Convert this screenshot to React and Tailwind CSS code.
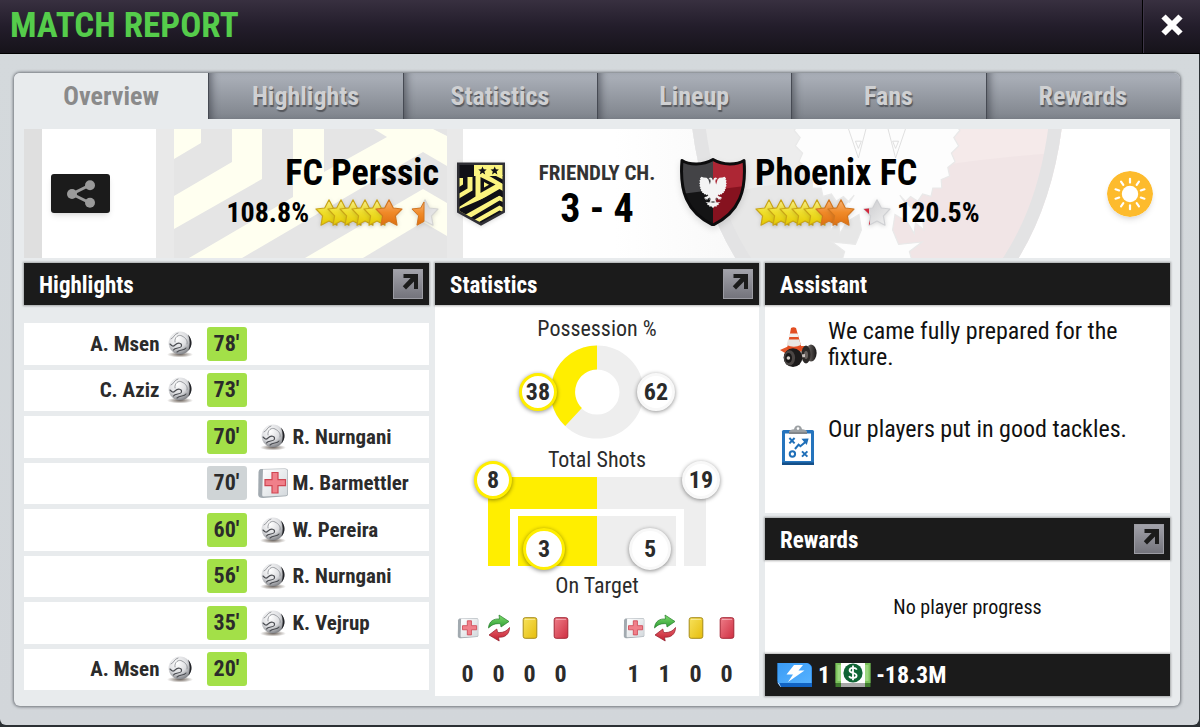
import React from "react";

const TABS = ["Overview", "Highlights", "Statistics", "Lineup", "Fans", "Rewards"];

const EVENTS = [
  { minute: 78, side: "home", name: "A. Msen", kind: "goal" },
  { minute: 73, side: "home", name: "C. Aziz", kind: "goal" },
  { minute: 70, side: "away", name: "R. Nurngani", kind: "goal" },
  { minute: 70, side: "away", name: "M. Barmettler", kind: "injury" },
  { minute: 60, side: "away", name: "W. Pereira", kind: "goal" },
  { minute: 56, side: "away", name: "R. Nurngani", kind: "goal" },
  { minute: 35, side: "away", name: "K. Vejrup", kind: "goal" },
  { minute: 20, side: "home", name: "A. Msen", kind: "goal" },
];

const STAR = "M14 .8 L18.3 9 L27 10 L20.4 16.8 L22 26.2 L14 22 L6 26.2 L7.6 16.8 L1 10 L9.7 9 Z";

const SHIELD = "M1 1.5 C8 6 22 6.5 32 .5 C42 6.5 56 6 63 1.5 C65.5 31 59 53 32 66 C5 53 -1.5 31 1 1.5 Z";

const HALF_EAGLE =
  "M32 21.5 L30.8 19 L29 18.6 L27.6 20 L29.4 20.6 L29.6 22.6 L28.9 25.4 L27.4 20.4 L25.6 18.8 L22.5 18.6 L20.4 17.8 L18.9 19.4 L19.6 20.6 L18.3 21.8 L19.2 23 L18.2 24.4 L19.2 25.6 L18.4 27 L19.6 28.2 L19 29.6 L20.2 30.6 L19.9 32 L21.3 32.6 L21.2 34 L22.7 34 L23 35.4 L24.4 35 L25.2 36.2 L26.4 35.4 L27.4 36.4 L28.2 35.2 L26 37.6 L23.8 38 L23 39.6 L24.4 39.2 L24.2 41 L25.6 39.8 L25.8 41.6 L27 39.6 L29 38.4 L29.4 41 L28.4 43.4 L24.5 43 L26.6 44.6 L26.2 46 L28.2 46.2 L28.4 47.8 L30.2 47.2 L32 49 Z";

function Defs() {
  return (
    <svg className="absolute h-0 w-0" aria-hidden="true">
      <defs>
        <linearGradient id="yellow" x1="0" y1="0" x2="0" y2="1">
          <stop offset="0" stopColor="#f7ec8c" />
          <stop offset=".45" stopColor="#f0e030" />
          <stop offset="1" stopColor="#e3c800" />
        </linearGradient>
        <linearGradient id="orange" x1="0" y1="0" x2="0" y2="1">
          <stop offset="0" stopColor="#f7b173" />
          <stop offset=".5" stopColor="#f08a28" />
          <stop offset="1" stopColor="#de6f10" />
        </linearGradient>
        <linearGradient id="silver" x1="0" y1="0" x2="1" y2="1">
          <stop offset="0" stopColor="#c9c9cc" />
          <stop offset="1" stopColor="#f2f2f2" />
        </linearGradient>
        <radialGradient id="ball" cx=".38" cy=".3" r=".75">
          <stop offset="0" stopColor="#ffffff" />
          <stop offset=".55" stopColor="#dcdde0" />
          <stop offset="1" stopColor="#77797e" />
        </radialGradient>
        <radialGradient id="shade">
          <stop offset="0" stopColor="#3a2c20" stopOpacity=".75" />
          <stop offset="1" stopColor="#3a2c20" stopOpacity="0" />
        </radialGradient>
        <linearGradient id="box" x1="0" y1="0" x2="1" y2="1">
          <stop offset="0" stopColor="#ffffff" />
          <stop offset="1" stopColor="#d3d8dc" />
        </linearGradient>
        <linearGradient id="redcard" x1="0" y1="0" x2="1" y2="1">
          <stop offset="0" stopColor="#ee7d88" />
          <stop offset="1" stopColor="#cf2f42" />
        </linearGradient>
        <linearGradient id="yellowcard" x1="0" y1="0" x2="1" y2="1">
          <stop offset="0" stopColor="#f7e25c" />
          <stop offset="1" stopColor="#e6bd0c" />
        </linearGradient>
        <linearGradient id="green" x1="0" y1="0" x2="0" y2="1">
          <stop offset="0" stopColor="#7fdc6c" />
          <stop offset="1" stopColor="#2c9c33" />
        </linearGradient>
        <linearGradient id="red" x1="0" y1="0" x2="0" y2="1">
          <stop offset="0" stopColor="#e8606a" />
          <stop offset="1" stopColor="#c01f30" />
        </linearGradient>
        <linearGradient id="energy" x1="0" y1="0" x2="1" y2="1">
          <stop offset="0" stopColor="#3a9bf5" />
          <stop offset="1" stopColor="#56b2ff" />
        </linearGradient>
        <linearGradient id="fadeLeft" x1="0" y1="0" x2="1" y2="0">
          <stop offset="0" stopColor="#ffffff" />
          <stop offset="1" stopColor="#f3f3f3" />
        </linearGradient>
        <linearGradient id="steel" x1="0" y1="0" x2="1" y2="0">
          <stop offset="0" stopColor="#c9c5c2" />
          <stop offset=".4" stopColor="#5a5552" />
          <stop offset="1" stopColor="#171515" />
        </linearGradient>
        <clipPath id="shieldClip">
          <path d={SHIELD} />
        </clipPath>
        <clipPath id="crestClip">
          <path d="M2.5 3 H45.5 V49 L24 60.8 L2.5 49 Z" />
        </clipPath>
      </defs>
    </svg>
  );
}

function Star({ fill, stroke, half, className = "" }) {
  return (
    <svg viewBox="0 0 28 28" className={`h-[30px] w-7 shrink-0 drop-shadow-sm ${className}`} aria-hidden="true">
      <path d={STAR} fill={fill} stroke={stroke} strokeWidth="1.2" strokeLinejoin="round" />
      {half}
    </svg>
  );
}

function Stars({ oranges, partial }) {
  const list = [...Array(5).fill("yellow"), ...Array(oranges).fill("orange")];
  return (
    <span className="flex items-center" role="img" aria-label="Team rating">
      {list.map((c, i) => (
        <Star
          key={i}
          fill={c === "yellow" ? "url(#yellow)" : "url(#orange)"}
          stroke={c === "yellow" ? "#c9a516" : "#d27620"}
          className={i ? "-ml-4" : ""}
        />
      ))}
      <Star
        fill="url(#silver)"
        stroke={partial === "half" ? "#d4d4d2" : "#cfd0d3"}
        className="ml-2"
        half={
          partial === "half" ? (
            <path
              d="M13 3 L13 22.4 L6 26.2 L7.6 16.8 L1 10 L9.7 9 Z"
              fill="url(#orange)"
              stroke="#d27620"
              strokeLinejoin="round"
            />
          ) : (
            <path d="M.8 10 L6 9.6 L6 15 Z M6 21 L6 26 L7 25 Z" fill="#d2283c" />
          )
        }
      />
    </span>
  );
}

function HomeCrest() {
  return (
    <svg viewBox="0 0 48 64" className="h-16 w-12 shrink-0 drop-shadow-sm" role="img" aria-label="FC Perssic crest">
      <path d="M0 .5 H48 V50.5 L24 63.8 L0 50.5 Z" fill="#303036" />
      <g clipPath="url(#crestClip)">
        <rect width="48" height="64" fill="#101016" />
        <path d="M17 3 H46 V14 H17 Z" fill="#fbf480" />
        <g fill="#fbf480">
          <path d="M2 16 H6 V22.5 L2 25 Z" />
          <path d="M10.5 15 H15.5 V28.5 L2 36.5 V31.5 L10.5 26.5 Z" />
          <path d="M18.5 12 H29 L46 22 V29 L42.5 27 L2 50.5 V45 L18.5 34.5 Z" />
          <path d="M8 53.5 L2 50 L42.5 33.5 L46 35.5 V40 L42.5 38.5 L13 56 Z" />
          <path d="M17 58 L42.5 43.5 L46 45.5 V50 L42.5 48.5 L22 60 Z" />
          <path d="M37 13 H46 V17.5 Z" />
        </g>
        <path d="M2 47 L42.5 29.5 L46 31 V35.5 L42.5 33.5 L7 53.5 L2 51 Z" fill="#101016" />
        <path d="M23.5 15 L38.5 22.5 L23.5 31 Z" fill="#101016" />
        <path d="M27 20 L32 22.8 L27 25.6 Z" fill="#fbf480" />
        <path d="M25.5 4.4 l1.2 2.8 3 .2 -2.3 2 .8 3 -2.7-1.6 -2.7 1.6 .8-3 -2.3-2 3-.2z M37.7 4.4 l1.2 2.8 3 .2 -2.3 2 .8 3 -2.7-1.6 -2.7 1.6 .8-3 -2.3-2 3-.2z" fill="#101016" />
      </g>
    </svg>
  );
}

function AwayCrest() {
  return (
    <svg viewBox="-1 -1 66 68" className="h-[68px] w-[66px] shrink-0 drop-shadow-md" role="img" aria-label="Phoenix FC crest">
      <g clipPath="url(#shieldClip)">
        <rect width="32" height="67" fill="#141415" />
        <rect x="32" width="33" height="67" fill="#86121f" />
        <path d="M0 0 H32 V31 Q16 33 0 35 Z" fill="#434346" />
        <path d="M32 0 H64 V27 Q48 29 32 31 Z" fill="#ad2634" />
      </g>
      <path d={SHIELD} fill="none" stroke="#0c0c0d" strokeWidth="3" strokeLinejoin="round" />
      <g fill="#f4f4f4">
        <path d={HALF_EAGLE} />
        <path d={HALF_EAGLE} transform="translate(64 0) scale(-1 1)" />
      </g>
      <path d="M28 39 l2 1 -2 1z M36 39 l-2 1 2 1z M29 43 l3-1 3 1 -3 1z" fill="#666" />
    </svg>
  );
}

function HeroBackground() {
  return (
    <svg
      viewBox="0 0 1146 129"
      preserveAspectRatio="xMidYMid slice"
      className="absolute inset-0 h-full w-full"
      aria-hidden="true"
    >
      <rect width="1146" height="129" fill="#ffffff" />
      <rect width="18" height="129" fill="#dfdfdf" />
      <rect x="132" width="307" height="129" fill="#e9e9e9" />
      <rect x="150" width="273" height="129" fill="#e5e5e5" />
      <g fill="#fffff0">
        <path d="M150 0 H177 V14 L150 30 Z" />
        <path d="M208 0 H238 V50 L150 100 V67 L208 33 Z" />
        <path d="M269 0 H300 V43 L363 8 L350 0 H409 L423 7 V37 L399 23 L218 129 H165 L269 68 Z" />
        <path d="M281 129 L399 60 L423 74 V107 L399 93 L339 129 Z" />
      </g>
      <path d="M590 0 H668 L712 129 H590 Z" fill="url(#fadeLeft)" opacity=".5" />
      <g transform="translate(661 -145) scale(6)">
        <g clipPath="url(#shieldClip)">
          <rect width="32" height="67" fill="#e7e7e7" />
          <rect x="32" width="33" height="67" fill="#f1e5e6" />
          <path d="M0 0 H32 V31 Q16 33 0 36 Z" fill="#ededed" />
          <path d="M32 0 H64 V28 Q48 29 32 32 Z" fill="#f5eaea" />
          <path d={SHIELD} fill="none" stroke="#e3e3e4" strokeWidth="4.4" />
        </g>
        <g fill="#fdfdfd" stroke="#e9e9e9" strokeWidth=".2">
          <path d={HALF_EAGLE} />
          <path d={HALF_EAGLE} transform="translate(64 0) scale(-1 1)" />
        </g>
        <path d="M26 20 H38 V34.6 L34.4 35 V46 H29.6 V35 L26 34.6 Z" fill="#fdfdfd" />
        <path
          d="M27.2 24 L28.9 29 L30.2 24 M28.4 26.2 H29.4 L28.9 27.4 Z M36.8 24 L35.1 29 L33.8 24 M35.6 26.2 H34.6 L35.1 27.4 Z"
          fill="none"
          stroke="#dcdcdc"
          strokeWidth=".15"
        />
      </g>
    </svg>
  );
}

function Ball() {
  return (
    <svg viewBox="0 0 28 28" className="h-7 w-7 shrink-0" role="img" aria-label="Goal">
      <ellipse cx="14" cy="24.5" rx="13" ry="3" fill="url(#shade)" />
      <circle cx="14" cy="13" r="11.4" fill="url(#ball)" />
      <g fill="none" stroke="#85888d" strokeWidth=".8" strokeLinecap="round">
        <path d="M5 9 C8 8 8 4 12 3 M9 12 C8 7 13 4 16 6 C20 8 22 11 21 14" />
        <path d="M4 14 C6 16 7 17 9 15 C12 12 16 13 15.5 16 C15 19 9 17 7.5 20" stroke="#4b4d52" strokeWidth="1.1" />
        <path d="M11 22 C14 19 18 21 20 18" stroke="#4b4d52" strokeWidth="1.1" />
      </g>
      <path d="M22 4.6 C26.6 9.6 26.6 16 22.5 20.4 C24.2 15 24.2 10 22 4.6 Z" fill="#222327" />
    </svg>
  );
}

function Medical({ className = "h-8 w-8" }) {
  return (
    <svg viewBox="0 0 32 32" className={`shrink-0 ${className}`} role="img" aria-label="Injury">
      <path d="M3.5 2 L28 1.5 Q31 1.5 31 4 L31 27 Q31 29 29 29.2 L6 31 Q1.5 31 1.2 28 L1.5 5 Q1.8 2.4 3.5 2 Z" fill="#a2aab0" />
      <path d="M6 2.6 L28 2 Q30.4 2 30.4 4 L30.4 26.5 Q30.4 28.4 28.6 28.5 L6.8 29.6 Q5.2 29.6 5.2 28 Z" fill="url(#box)" />
      <path d="M15 5.5 H21 V12.6 H28.5 V18.6 H21 V26 H15 V18.6 H8 V12.6 H15 Z" fill="#f0808a" stroke="#cf4652" strokeWidth="1.2" />
    </svg>
  );
}

function Swap() {
  return (
    <svg viewBox="0 0 24 28" className="h-7 w-6 shrink-0" role="img" aria-label="Substitutions">
      <path d="M1.5 14 C2 7 7 4.5 12.5 5 L12 1 L22 7.5 L14 13 L13.5 9.8 C8.5 9.2 5 10.5 1.5 14 Z" fill="url(#green)" stroke="#267d2b" strokeWidth=".7" />
      <path d="M22.5 13.5 C22.5 20.5 17.5 23.8 11.5 23.2 L12.2 27 L2 21 L9.8 15 L10.6 18.4 C15.5 19 19.5 17.5 22.5 13.5 Z" fill="url(#red)" stroke="#8f1a28" strokeWidth=".7" />
    </svg>
  );
}

function Card({ red }) {
  return (
    <svg viewBox="0 0 16 24" className="h-6 w-4 shrink-0" role="img" aria-label={red ? "Red cards" : "Yellow cards"}>
      <rect x="1.2" y="1.7" width="13.6" height="20.6" rx="2" fill={red ? "url(#redcard)" : "url(#yellowcard)"} stroke={red ? "#a32534" : "#a58a18"} />
      <path d="M3 3.4 H13" stroke="#fff" strokeOpacity=".45" />
    </svg>
  );
}

function Cone() {
  return (
    <svg viewBox="0 0 38 42" className="h-[42px] w-[38px] shrink-0" aria-hidden="true">
      <path d="M1 24 L10 20 L26 20 L30 26 L16 33 L5 30 L6 27 Z" fill="#e3572a" />
      <path d="M12 2 Q14.5 .4 17 2 L23 23 Q15 29 8 23 Z" fill="#e24e22" />
      <path d="M10.6 7.5 H18.6 L19.6 11 H9.6 Z" fill="#f3f0ec" />
      <path d="M9 13.4 H20.2 L21.8 19 Q15 22.6 7.6 19 Z" fill="#e9e5e1" />
      <path d="M13 26.5 L33 24 V28 L14 31.5 Z" fill="#b0aaa5" />
      <ellipse cx="32" cy="27" rx="5.6" ry="8.6" fill="url(#steel)" />
      <ellipse cx="27" cy="28.5" rx="4.6" ry="9" fill="#2c2928" />
      <ellipse cx="27" cy="29" rx="2" ry="4" fill="#68625f" />
      <path d="M15 29.6 L26 28 V31 L15 33 Z" fill="#c7c1bd" />
      <circle cx="14" cy="31.6" r="9.4" fill="#1d1b1b" />
      <ellipse cx="10.5" cy="31.8" rx="5.6" ry="7.6" fill="#4b4644" />
      <ellipse cx="9.6" cy="32" rx="3.4" ry="5" fill="#191717" />
      <circle cx="9.4" cy="32" r="1.8" fill="#d6d0cb" />
    </svg>
  );
}

function Clipboard() {
  return (
    <svg viewBox="0 0 34 42" className="h-[42px] w-[34px] shrink-0" aria-hidden="true">
      <rect x="1" y="6" width="32" height="35" rx="1.5" fill="#2574bd" />
      <rect x="1" y="38.5" width="32" height="2.5" fill="#154f88" />
      <rect x="4" y="9.5" width="26" height="27.5" fill="#ffffff" />
      <path d="M8 10 V7.5 Q9 5.4 13 5.2 Q13.6 1.4 17 1.4 Q20.4 1.4 21 5.2 Q25 5.4 26 7.5 V10 Z" fill="#9da1a4" />
      <path d="M8 9 H26" stroke="#696d70" />
      <circle cx="17" cy="4.6" r="1.3" fill="#ffffff" />
      <g fill="none" stroke="#1f6fb8" strokeWidth="2">
        <path d="M8.4 14 L13.6 19.4 M13.6 14 L8.4 19.4 M21 27.4 L26.4 32.6 M26.4 27.4 L21 32.6" />
        <circle cx="11.4" cy="30" r="2.7" />
        <path d="M14 25 L17.6 20.6 L19.4 22.2 L25 17.4" />
      </g>
      <path d="M20.4 14.8 L27.6 14.4 L25.8 21 Z" fill="#1f6fb8" />
    </svg>
  );
}

function Energy() {
  return (
    <svg viewBox="0 0 36 26" className="h-[26px] w-9 shrink-0" role="img" aria-label="Energy">
      <path d="M.5 1 H31 Q35 3 35 6 V25 H3.5 L.5 21 Z" fill="#1163c4" />
      <path d="M.5 1 H30 Q34.6 3 34.6 6 V21 H1.4 L.5 19 Z" fill="url(#energy)" />
      <path d="M.5 20.5 L2 21 L4 25 H3.5 Z" fill="#cfe6ff" />
      <path d="M17 3 H26 L21.5 8.4 H27.5 L11 20 L16 12.4 H9.5 Z" fill="#ffffff" />
    </svg>
  );
}

function Cash() {
  return (
    <svg viewBox="0 0 36 26" className="h-[26px] w-9 shrink-0" role="img" aria-label="Cash">
      <rect x=".5" y="1" width="35" height="24" fill="#3f7a2e" />
      <rect x=".5" y="1" width="35" height="20" fill="#7cc25c" />
      <path d="M2.5 3 H7 V19 H2.5 Z M29 3 H33.5 V19 H29 Z" fill="#9bd77f" />
      <rect x="6" y="1" width="24" height="20" fill="#ffffff" />
      <rect x="6" y="21" width="24" height="4" fill="#a9a9a9" />
      <circle cx="18" cy="11" r="9.6" fill="#0f6434" />
      <path d="M21.8 7.6 C20.6 5.4 14.6 5.2 14.6 8.4 C14.6 11.6 21.6 10.2 21.6 13.6 C21.6 16.8 15.4 16.6 14 14.2 M18 3.6 V18.2" fill="none" stroke="#fff" strokeWidth="1.8" />
    </svg>
  );
}

function Sun() {
  return (
    <svg viewBox="0 0 46 46" className="h-[46px] w-[46px] shrink-0 rounded-full shadow-md" role="img" aria-label="Sunny">
      <circle cx="23" cy="23" r="23" fill="#fdbb2d" />
      <circle cx="23" cy="23" r="8.2" fill="#ffffff" />
      {Array.from({ length: 10 }, (_, i) => (
        <path key={i} d="M23 11.6 V7.8" stroke="#ffffff" strokeWidth="2.2" strokeLinecap="round" transform={`rotate(${i * 36} 23 23)`} />
      ))}
    </svg>
  );
}

function PanelHeader({ title, expand }) {
  return (
    <div className="flex h-[42px] shrink-0 items-center justify-between bg-[#1b1b1b] pr-[6px] pl-[15px] shadow-[0_0_2px_1px_rgba(0,0,0,0.3)]">
      <h2 className="pt-[3px] text-[23px] leading-7 font-bold text-white">{title}</h2>
      {expand && (
        <button type="button" aria-label={`Open ${title}`} className="flex h-[30px] w-[30px] items-center justify-center border border-[#9c9ca3] bg-linear-to-b from-[#a2a2aa] to-[#74747c]">
          <svg viewBox="0 0 18 18" className="mb-1 ml-1 h-[18px] w-[18px]" aria-hidden="true">
            <path d="M2.5 1 H17 V16 H13 V8.4 L5 16.4 L1.8 13.2 L9.6 5 H2.5 Z" fill="#1b1b1b" />
          </svg>
        </button>
      )}
    </div>
  );
}

function EventLabel({ event }) {
  const home = event.side === "home";
  return (
    <div className={home ? "flex items-center justify-end gap-[6px] pr-[13px]" : "flex items-center gap-[6px] pl-[12px]"}>
      {home && <span className="text-[21px] leading-7">{event.name}</span>}
      {event.kind === "goal" ? <Ball /> : <Medical className="-mx-[2px] h-8 w-8" />}
      {!home && <span className="text-[21px] leading-7">{event.name}</span>}
    </div>
  );
}

function EventRow({ event }) {
  const goal = event.kind === "goal";
  return (
    <li className="grid flex-1 grid-cols-[1fr_40px_1fr] items-center bg-white font-bold text-[#2b2b2b]">
      {event.side === "home" ? <EventLabel event={event} /> : <span />}
      <span className={`flex h-[34px] items-center justify-center rounded-[3px] text-[22px] leading-7 ${goal ? "bg-[#a3e048]" : "bg-[#cfd4d6]"}`}>
        {event.minute}'
      </span>
      {event.side === "away" && <EventLabel event={event} />}
    </li>
  );
}

function Bubble({ value, home, className }) {
  return (
    <span
      className={`absolute flex items-center justify-center rounded-full border-[3px] bg-white text-[24px] leading-7 font-bold text-[#2b2b2b] shadow-[0_1px_4px_rgba(0,0,0,0.45)] ${home ? "border-[#ffee00]" : "border-[#f8f8f8]"} ${className}`}
    >
      {value}
    </span>
  );
}

function Counts({ label, values }) {
  const icons = [<Medical className="h-[22px] w-[22px]" />, <Swap />, <Card />, <Card red />];
  return (
    <ul aria-label={label} className="grid grid-cols-4">
      {values.map((v, i) => (
        <li key={i} className="flex w-[31px] flex-col items-center gap-[18px]">
          <span className="flex h-7 items-center">{icons[i]}</span>
          <span className="text-[24px] leading-7 font-bold">{v}</span>
        </li>
      ))}
    </ul>
  );
}

function Statistics() {
  return (
    <section className="flex flex-col bg-white">
      <PanelHeader title="Statistics" expand />
      <div className="flex flex-1 flex-col items-center pt-[10px] text-[#2b2b2b]">
        <h3 className="text-[22px] leading-7">Possession %</h3>
        <div className="relative mt-[2px] flex h-[94px] w-[156px] justify-center">
          <svg viewBox="0 0 94 94" className="h-[94px] w-[94px]" aria-hidden="true">
            <circle cx="47" cy="47" r="34.5" fill="none" stroke="#eeeeee" strokeWidth="24" />
            <path d="M47 .5 A46.5 46.5 0 0 0 15.2 80.9 L31.9 63.1 A22.5 22.5 0 0 1 47 24.5 Z" fill="#ffee00" />
          </svg>
          <Bubble value="38" home className="top-[28px] left-0 h-[38px] w-[38px]" />
          <Bubble value="62" className="top-[28px] right-0 h-[38px] w-[38px]" />
        </div>
        <h3 className="mt-[7px] text-[22px] leading-7">Total Shots</h3>
        <div className="relative mt-[3px] flex h-[89px] w-[218px] justify-center">
          <svg viewBox="0 0 218 89" className="h-[89px] w-[218px]" aria-hidden="true">
            <path d="M109 0 H0 V89 H22 V32 H109 Z M109 39 H30 V89 H109 Z" fill="#ffee00" />
            <path d="M109 0 H218 V89 H196 V32 H109 Z M109 39 H188 V89 H109 Z" fill="#eeeeee" />
          </svg>
          <Bubble value="8" home className="-top-[16px] -left-[14px] h-[38px] w-[38px]" />
          <Bubble value="19" className="-top-[16px] -right-[14px] h-[38px] w-[38px]" />
          <Bubble value="3" home className="top-[51px] left-[35px] h-[42px] w-[42px]" />
          <Bubble value="5" className="top-[51px] right-[35px] h-[42px] w-[42px]" />
        </div>
        <h3 className="mt-[6px] text-[22px] leading-7">On Target</h3>
        <div className="mt-[14px] flex gap-[42px]">
          <Counts label="FC Perssic" values={[0, 0, 0, 0]} />
          <Counts label="Phoenix FC" values={[1, 1, 0, 0]} />
        </div>
      </div>
    </section>
  );
}

function Hero() {
  return (
    <section className="relative overflow-hidden">
      <HeroBackground />
      <div className="relative grid h-[129px] grid-cols-[1fr_132px_1fr] items-center text-black">
        <div className="flex items-center justify-between pr-[26px] pl-[27px]">
          <button type="button" aria-label="Share" className="flex h-[39px] w-[59px] items-center justify-center rounded-[3px] bg-[#1b1b1b] shadow-md">
            <svg viewBox="0 0 30 28" className="h-7 w-[30px]" aria-hidden="true">
              <path d="M24 5 L6 14 L24 23" fill="none" stroke="#9a9a9a" strokeWidth="3" />
              <g fill="#9a9a9a">
                <circle cx="24" cy="5.2" r="5" />
                <circle cx="6" cy="14" r="5" />
                <circle cx="24" cy="22.8" r="5" />
              </g>
            </svg>
          </button>
          <div className="flex items-center gap-[18px]">
            <div className="flex flex-col items-end pb-[6px]">
              <span className="text-[36px] leading-[44px] font-bold">FC Perssic</span>
              <div className="flex items-center gap-[6px]">
                <span className="text-[28px] leading-9 font-bold">108.8%</span>
                <Stars oranges={1} partial="half" />
              </div>
            </div>
            <HomeCrest />
          </div>
        </div>
        <div className="flex flex-col items-center pt-1">
          <span className="text-[21px] leading-[26px] font-bold text-[#333333]">FRIENDLY CH.</span>
          <span className="text-[40px] leading-[46px] font-bold">3 - 4</span>
        </div>
        <div className="flex items-center justify-between pr-[17px] pl-[17px]">
          <div className="flex items-center gap-[9px]">
            <div className="pb-1">
              <AwayCrest />
            </div>
            <div className="flex flex-col items-start pb-[6px]">
              <span className="text-[36px] leading-[44px] font-bold">Phoenix FC</span>
              <div className="flex items-center gap-[6px]">
                <Stars oranges={2} partial="sliver" />
                <span className="text-[28px] leading-9 font-bold">120.5%</span>
              </div>
            </div>
          </div>
          <Sun />
        </div>
      </div>
    </section>
  );
}

export default function App() {
  return (
    <div className="flex min-h-screen flex-col bg-[#2b3034] font-['Roboto_Condensed','Liberation_Sans',sans-serif]">
      <Defs />
      <header className="flex h-[54px] items-stretch justify-between border-b border-black bg-linear-to-b from-[#383040] via-[#231d2b] to-[#16131a]">
        <h1 className="pl-[10px] text-[35px] leading-[52px] font-bold text-[#55cc4b]">MATCH REPORT</h1>
        <button type="button" aria-label="Close" className="flex w-[58px] items-center justify-center border-l border-black pb-1 shadow-[inset_1px_0_0_#3d3547]">
          <svg viewBox="0 0 22 22" className="h-[22px] w-[22px]" aria-hidden="true">
            <path d="M2.5 2.5 L19.5 19.5 M19.5 2.5 L2.5 19.5" stroke="#ffffff" strokeWidth="6" />
          </svg>
        </button>
      </header>
      <main className="mr-[1px] mb-[2px] flex flex-1 flex-col rounded-b-md bg-linear-to-b from-[#d4d9dc] to-[#d2d6da] pt-[19px] pr-[19px] pb-[19px] pl-[14px]">
        <div className="flex flex-1 flex-col rounded-md bg-[#e8ebed] shadow-[0_0_3px_1px_rgba(60,65,72,0.65)]">
          <div role="tablist" className="flex h-[46px] overflow-hidden rounded-t-md">
            {TABS.map((tab, i) => (
              <button
                key={tab}
                type="button"
                role="tab"
                aria-selected={i === 0}
                className={
                  i === 0
                    ? "flex-1 bg-[#e8ebed] text-[26px] leading-[46px] font-bold text-[#8a8a8a]"
                    : "flex-1 bg-linear-to-b from-[#adb2bb] to-[#7f848c] text-[26px] leading-[46px] font-bold text-[#cfd0d2] shadow-[inset_8px_0_8px_-5px_rgba(40,44,52,0.6),inset_1px_0_0_#5e636b] [text-shadow:1px_2px_1px_#55585e]"
                }
              >
                {tab}
              </button>
            ))}
          </div>
          <div className="flex flex-1 flex-col gap-[5px] px-[10px] pt-[10px] pb-[10px]">
            <Hero />
            <div className="grid flex-1 grid-cols-[5fr_4fr_5fr] gap-[6px]">
              <section className="flex flex-col">
                <PanelHeader title="Highlights" expand />
                <ul className="flex flex-1 flex-col gap-[5px] pt-[18px] pb-[6px]">
                  {EVENTS.map((event) => (
                    <EventRow key={event.minute + event.name} event={event} />
                  ))}
                </ul>
              </section>
              <Statistics />
              <div className="flex flex-col gap-[5px]">
                <section className="flex flex-1 flex-col bg-white">
                  <PanelHeader title="Assistant" />
                  <ul className="flex flex-col gap-[46px] pt-[13px] pr-6 pl-[14px] text-[24px] leading-[26px] text-[#111111]">
                    <li className="flex gap-[11px]">
                      <span className="flex w-[38px] justify-center pt-2">
                        <Cone />
                      </span>
                      <p>We came fully prepared for the fixture.</p>
                    </li>
                    <li className="flex gap-[11px]">
                      <span className="flex w-[38px] justify-center pt-2">
                        <Clipboard />
                      </span>
                      <p>Our players put in good tackles.</p>
                    </li>
                  </ul>
                </section>
                <section className="flex flex-col bg-white">
                  <PanelHeader title="Rewards" expand />
                  <p className="flex h-[94px] items-center justify-center text-[20px] leading-7 text-[#111111]">No player progress</p>
                  <div className="flex h-[42px] items-center gap-[5px] bg-[#1b1b1b] pl-3 text-[24px] leading-7 font-bold text-white shadow-[0_0_2px_1px_rgba(0,0,0,0.3)]">
                    <Energy />
                    <span>1</span>
                    <Cash />
                    <span>-18.3M</span>
                  </div>
                </section>
              </div>
            </div>
          </div>
        </div>
      </main>
    </div>
  );
}
